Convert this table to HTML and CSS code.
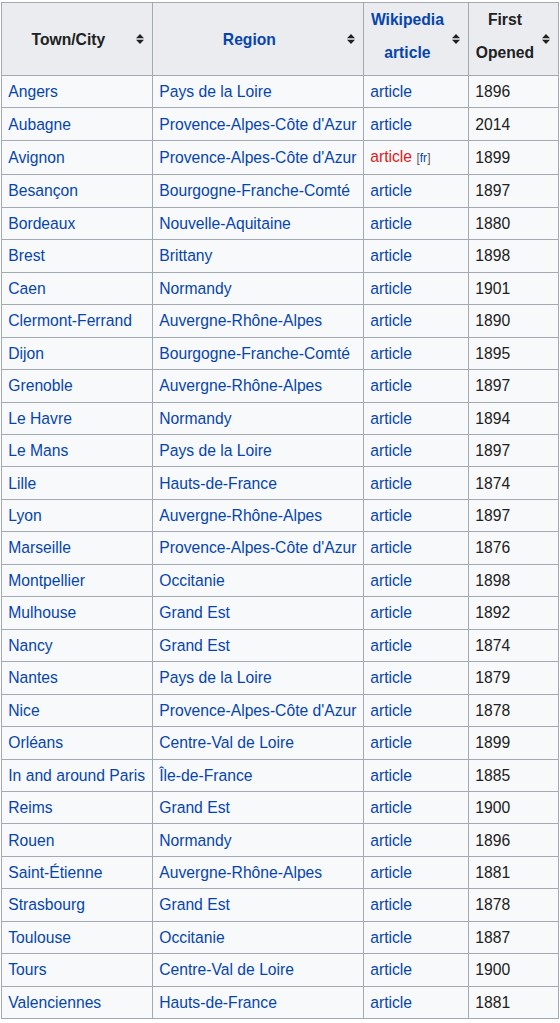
FILE: index.html
```html
<!DOCTYPE html>
<html>
<head>
<meta charset="utf-8">
<link rel="stylesheet" href="styles.css">
</head>
<body>
<table class="wikitable">
<colgroup><col class="c1"><col class="c2"><col class="c3"><col class="c4"></colgroup>
<thead>
<tr>
<th><div class="hd"><span class="ht">Town/City</span><span class="si"><svg width="8" height="10" viewBox="0 0 8 10"><path d="M0 4.3 L4 0 L8 4.3 Z M0 5.7 L8 5.7 L4 10 Z" fill="#202122"/></svg></span></div></th>
<th><div class="hd"><span class="ht"><a>Region</a></span><span class="si"><svg width="8" height="10" viewBox="0 0 8 10"><path d="M0 4.3 L4 0 L8 4.3 Z M0 5.7 L8 5.7 L4 10 Z" fill="#202122"/></svg></span></div></th>
<th class="two"><div class="hd"><span class="ht"><a>Wikipedia<br>article</a></span><span class="si"><svg width="8" height="10" viewBox="0 0 8 10"><path d="M0 4.3 L4 0 L8 4.3 Z M0 5.7 L8 5.7 L4 10 Z" fill="#202122"/></svg></span></div></th>
<th class="two"><div class="hd"><span class="ht">First<br>Opened</span><span class="si"><svg width="8" height="10" viewBox="0 0 8 10"><path d="M0 4.3 L4 0 L8 4.3 Z M0 5.7 L8 5.7 L4 10 Z" fill="#202122"/></svg></span></div></th>
</tr>
</thead>
<tbody>
<tr><td><a>Angers</a></td><td><a>Pays de la Loire</a></td><td><a>article</a></td><td>1896</td></tr>
<tr><td><a>Aubagne</a></td><td><a>Provence-Alpes-Côte d'Azur</a></td><td><a>article</a></td><td>2014</td></tr>
<tr><td><a>Avignon</a></td><td><a>Provence-Alpes-Côte d'Azur</a></td><td><a class="new">article</a> <span class="ill">[<a>fr</a>]</span></td><td>1899</td></tr>
<tr><td><a>Besançon</a></td><td><a>Bourgogne-Franche-Comté</a></td><td><a>article</a></td><td>1897</td></tr>
<tr><td><a>Bordeaux</a></td><td><a>Nouvelle-Aquitaine</a></td><td><a>article</a></td><td>1880</td></tr>
<tr><td><a>Brest</a></td><td><a>Brittany</a></td><td><a>article</a></td><td>1898</td></tr>
<tr><td><a>Caen</a></td><td><a>Normandy</a></td><td><a>article</a></td><td>1901</td></tr>
<tr><td><a>Clermont-Ferrand</a></td><td><a>Auvergne-Rhône-Alpes</a></td><td><a>article</a></td><td>1890</td></tr>
<tr><td><a>Dijon</a></td><td><a>Bourgogne-Franche-Comté</a></td><td><a>article</a></td><td>1895</td></tr>
<tr><td><a>Grenoble</a></td><td><a>Auvergne-Rhône-Alpes</a></td><td><a>article</a></td><td>1897</td></tr>
<tr><td><a>Le Havre</a></td><td><a>Normandy</a></td><td><a>article</a></td><td>1894</td></tr>
<tr><td><a>Le Mans</a></td><td><a>Pays de la Loire</a></td><td><a>article</a></td><td>1897</td></tr>
<tr><td><a>Lille</a></td><td><a>Hauts-de-France</a></td><td><a>article</a></td><td>1874</td></tr>
<tr><td><a>Lyon</a></td><td><a>Auvergne-Rhône-Alpes</a></td><td><a>article</a></td><td>1897</td></tr>
<tr><td><a>Marseille</a></td><td><a>Provence-Alpes-Côte d'Azur</a></td><td><a>article</a></td><td>1876</td></tr>
<tr><td><a>Montpellier</a></td><td><a>Occitanie</a></td><td><a>article</a></td><td>1898</td></tr>
<tr><td><a>Mulhouse</a></td><td><a>Grand Est</a></td><td><a>article</a></td><td>1892</td></tr>
<tr><td><a>Nancy</a></td><td><a>Grand Est</a></td><td><a>article</a></td><td>1874</td></tr>
<tr><td><a>Nantes</a></td><td><a>Pays de la Loire</a></td><td><a>article</a></td><td>1879</td></tr>
<tr><td><a>Nice</a></td><td><a>Provence-Alpes-Côte d'Azur</a></td><td><a>article</a></td><td>1878</td></tr>
<tr><td><a>Orléans</a></td><td><a>Centre-Val de Loire</a></td><td><a>article</a></td><td>1899</td></tr>
<tr><td><a>In and around Paris</a></td><td><a>Île-de-France</a></td><td><a>article</a></td><td>1885</td></tr>
<tr><td><a>Reims</a></td><td><a>Grand Est</a></td><td><a>article</a></td><td>1900</td></tr>
<tr><td><a>Rouen</a></td><td><a>Normandy</a></td><td><a>article</a></td><td>1896</td></tr>
<tr><td><a>Saint-Étienne</a></td><td><a>Auvergne-Rhône-Alpes</a></td><td><a>article</a></td><td>1881</td></tr>
<tr><td><a>Strasbourg</a></td><td><a>Grand Est</a></td><td><a>article</a></td><td>1878</td></tr>
<tr><td><a>Toulouse</a></td><td><a>Occitanie</a></td><td><a>article</a></td><td>1887</td></tr>
<tr><td><a>Tours</a></td><td><a>Centre-Val de Loire</a></td><td><a>article</a></td><td>1900</td></tr>
<tr><td><a>Valenciennes</a></td><td><a>Hauts-de-France</a></td><td><a>article</a></td><td>1881</td></tr>
</tbody>
</table>
</body>
</html>
```

FILE: styles.css
```css
html, body {
  margin: 0;
  padding: 0;
  background: #ffffff;
}
body {
  font-family: "Liberation Sans", Arial, sans-serif;
  font-size: 15.68px;
  color: #202122;
}
.wikitable {
  margin: 2px 0 0 1px;
  border-collapse: collapse;
  table-layout: fixed;
  width: 557px;
  background: #f8f9fa;
  border: 1px solid #a2a9b1;
}
.c1 { width: 151px; }
.c2 { width: 211px; }
.c3 { width: 105px; }
.c4 { width: 90px; }
.wikitable th,
.wikitable td {
  border: 1px solid #a2a9b1;
  padding: 3.14px 6.27px;
  line-height: 25.2px;
  text-align: left;
  vertical-align: middle;
  white-space: nowrap;
  overflow: hidden;
}
.wikitable th {
  background: #eaecf0;
  font-weight: bold;
  line-height: 33px;
  padding: 3px 0 3px 6.27px;
}
.wikitable th.two {
  padding-top: 0;
  padding-bottom: 0;
}
.hd {
  display: flex;
  align-items: center;
}
.ht {
  flex: 1;
  text-align: center;
}
.two .ht {
  padding-bottom: 6px;
}
.si {
  width: 23.5px;
  flex: none;
  display: flex;
  justify-content: center;
  align-items: center;
}
.si svg {
  display: block;
}
a {
  color: #0645ad;
  text-decoration: none;
}
a.new {
  color: #d82020;
}
.ill {
  font-size: 12px;
  color: #54595d;
}
```
